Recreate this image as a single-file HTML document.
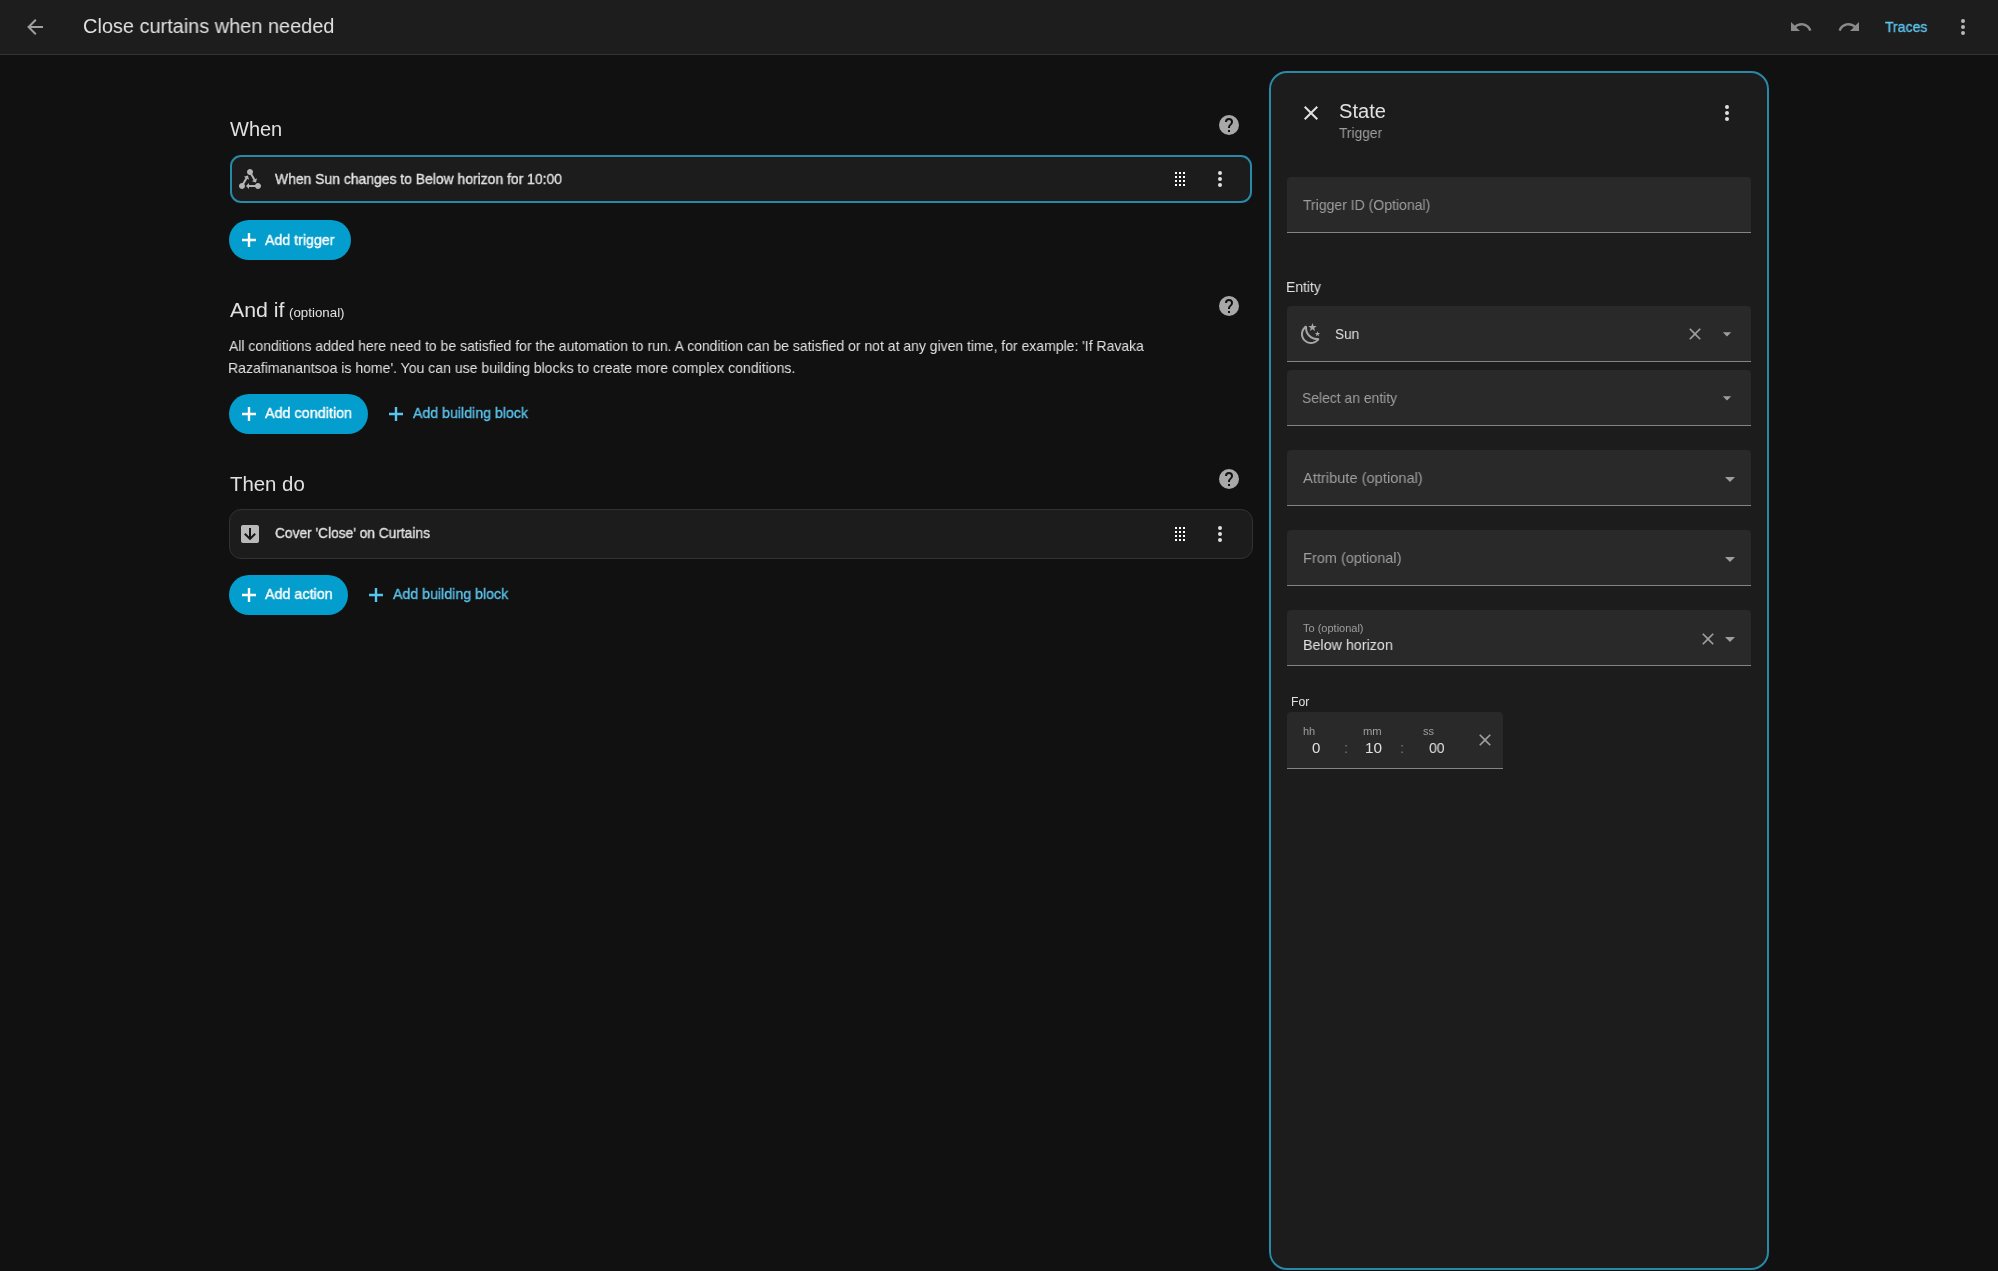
<!DOCTYPE html>
<html>
<head>
<meta charset="utf-8">
<style>
html,body{margin:0;padding:0;}
body{width:1998px;height:1271px;overflow:hidden;background:#111111;position:relative;font-family:"Liberation Sans",sans-serif;color:#e1e1e1;}
.a{position:absolute;}
.t{position:absolute;white-space:nowrap;line-height:1;transform-origin:0 0;will-change:transform;}
svg.i{position:absolute;width:24px;height:24px;}
.med{-webkit-text-stroke:0.35px currentColor;}
.hdr{left:0;top:0;width:1998px;height:54px;background:#1d1d1d;border-bottom:1px solid #333333;}
.card{position:absolute;left:229px;width:1024px;height:50px;box-sizing:border-box;background:#1c1c1c;border-radius:12px;}
.btn{position:absolute;left:229px;height:40px;border-radius:20px;background:#039ecd;}
.panel{left:1269px;top:71px;width:500px;height:1199px;box-sizing:border-box;border:2px solid #2889a8;border-radius:18px;background:#1c1c1c;}
.fld{position:absolute;left:1287px;width:464px;box-sizing:border-box;background:#292929;border-radius:4px 4px 0 0;border-bottom:1px solid #858585;}
.gray{color:#9e9e9e;}
</style>
</head>
<body>
<!-- header -->
<div class="a hdr"></div>
<svg class="i" style="left:23px;top:15px" viewBox="0 0 24 24"><path fill="#a0a0a0" d="M20,11V13H8L13.5,18.5L12.08,19.92L4.16,12L12.08,4.08L13.5,5.5L8,11H20Z"/></svg>
<svg class="i" style="left:1789px;top:15px" viewBox="0 0 24 24"><path fill="#8a8a8a" d="M12.5,8C9.85,8 7.45,9 5.6,10.6L2,7V16H11L7.38,12.38C8.77,11.22 10.54,10.5 12.5,10.5C16.04,10.5 19.05,12.81 20.1,16L22.47,15.22C21.08,11.03 17.15,8 12.5,8Z"/></svg>
<svg class="i" style="left:1837px;top:15px" viewBox="0 0 24 24"><path fill="#8a8a8a" d="M18.4,10.6C16.55,9 14.15,8 11.5,8C6.85,8 2.92,11.03 1.54,15.22L3.9,16C4.95,12.81 7.95,10.5 11.5,10.5C13.45,10.5 15.23,11.22 16.62,12.38L13,16H22V7L18.4,10.6Z"/></svg>
<svg class="i" style="left:1951px;top:15px" viewBox="0 0 24 24"><path fill="#b8b8b8" d="M12,16A2,2 0 0,1 14,18A2,2 0 0,1 12,20A2,2 0 0,1 10,18A2,2 0 0,1 12,16M12,10A2,2 0 0,1 14,12A2,2 0 0,1 12,14A2,2 0 0,1 10,12A2,2 0 0,1 12,10M12,4A2,2 0 0,1 14,6A2,2 0 0,1 12,8A2,2 0 0,1 10,6A2,2 0 0,1 12,4Z"/></svg>

<!-- When -->
<svg class="i" style="left:1217px;top:113px" viewBox="0 0 24 24"><circle cx="12" cy="12" r="10" fill="#a8a8a8"/><path fill="#111" d="M15.07,11.25L14.17,12.17C13.45,12.89 13,13.5 13,15H11V14.5C11,13.39 11.45,12.39 12.17,11.67L13.41,10.41C13.78,10.05 14,9.55 14,9C14,7.89 13.1,7 12,7A2,2 0 0,0 10,9H8A4,4 0 0,1 12,5A4,4 0 0,1 16,9C16,9.88 15.64,10.670 15.07,11.25M13,19H11V17H13Z"/></svg>
<div class="card" style="top:155px;left:230px;width:1022px;height:48px;border:2px solid #2889a8;border-radius:11px;"></div>
<svg class="i" style="left:238px;top:167px" viewBox="0 0 24 24"><path fill="#b4b4b4" d="M6.27 17.05C6.72 17.58 7 18.250 7 19C7 20.66 5.66 22 4 22S1 20.66 1 19 2.34 16 4 16C4.18 16 4.36 16 4.53 16.05L7.6 10.69L5.86 9.7L9.95 8.58L11.07 12.67L9.33 11.68L6.27 17.05M20 16C18.7 16 17.6 16.84 17.18 18H11V16L8 19L11 22V20H17.18C17.6 21.16 18.7 22 20 22C21.66 22 23 20.66 23 19S21.66 16 20 16M12 8C12.18 8 12.36 8 12.53 7.950L15.6 13.31L13.86 14.3L17.95 15.42L19.07 11.33L17.33 12.32L14.27 6.95C14.72 6.42 15 5.75 15 5C15 3.34 13.66 2 12 2S9 3.34 9 5 10.34 8 12 8Z"/></svg>
<svg class="i" style="left:1168px;top:167px" viewBox="0 0 24 24"><path fill="#ffffff" d="M7,19V17H9V19H7M11,19V17H13V19H11M15,19V17H17V19H15M7,15V13H9V15H7M11,15V13H13V15H11M15,15V13H17V15H15M7,11V9H9V11H7M11,11V9H13V11H11M15,11V9H17V11H15M7,7V5H9V7H7M11,7V5H13V7H11M15,7V5H17V7H15Z"/></svg>
<svg class="i" style="left:1208px;top:167px" viewBox="0 0 24 24"><path fill="#e1e1e1" d="M12,16A2,2 0 0,1 14,18A2,2 0 0,1 12,20A2,2 0 0,1 10,18A2,2 0 0,1 12,16M12,10A2,2 0 0,1 14,12A2,2 0 0,1 12,14A2,2 0 0,1 10,12A2,2 0 0,1 12,10M12,4A2,2 0 0,1 14,6A2,2 0 0,1 12,8A2,2 0 0,1 10,6A2,2 0 0,1 12,4Z"/></svg>
<div class="btn" style="top:220px;width:122px;"></div>
<svg class="i" style="left:237px;top:228px" viewBox="0 0 24 24"><path fill="#ffffff" d="M19,13.2H13.2V19H10.8V13.2H5V10.8H10.8V5H13.2V10.8H19V13.2Z"/></svg>

<!-- And if -->
<svg class="i" style="left:1217px;top:294px" viewBox="0 0 24 24"><circle cx="12" cy="12" r="10" fill="#a8a8a8"/><path fill="#111" d="M15.07,11.25L14.17,12.17C13.45,12.89 13,13.5 13,15H11V14.5C11,13.39 11.45,12.39 12.17,11.67L13.41,10.41C13.78,10.05 14,9.55 14,9C14,7.89 13.1,7 12,7A2,2 0 0,0 10,9H8A4,4 0 0,1 12,5A4,4 0 0,1 16,9C16,9.88 15.64,10.670 15.07,11.25M13,19H11V17H13Z"/></svg>
<div class="btn" style="top:394px;width:139px;"></div>
<svg class="i" style="left:237px;top:402px" viewBox="0 0 24 24"><path fill="#ffffff" d="M19,13.2H13.2V19H10.8V13.2H5V10.8H10.8V5H13.2V10.8H19V13.2Z"/></svg>
<svg class="i" style="left:384px;top:402px" viewBox="0 0 24 24"><path fill="#5bc4ee" d="M19,13.2H13.2V19H10.8V13.2H5V10.8H10.8V5H13.2V10.8H19V13.2Z"/></svg>

<!-- Then do -->
<svg class="i" style="left:1217px;top:467px" viewBox="0 0 24 24"><circle cx="12" cy="12" r="10" fill="#a8a8a8"/><path fill="#111" d="M15.07,11.25L14.17,12.17C13.45,12.89 13,13.5 13,15H11V14.5C11,13.39 11.45,12.39 12.17,11.67L13.41,10.41C13.78,10.05 14,9.55 14,9C14,7.89 13.1,7 12,7A2,2 0 0,0 10,9H8A4,4 0 0,1 12,5A4,4 0 0,1 16,9C16,9.88 15.64,10.670 15.07,11.25M13,19H11V17H13Z"/></svg>
<div class="card" style="top:509px;border:1px solid #323232;"></div>
<svg class="i" style="left:238px;top:522px" viewBox="0 0 24 24"><path fill="#b9b9b9" d="M5,3H19A2,2 0 0,1 21,5V19A2,2 0 0,1 19,21H5A2,2 0 0,1 3,19V5A2,2 0 0,1 5,3Z"/><path fill="#151515" d="M11,6V14.5L7.5,11L6.08,12.42L12,18.34L17.92,12.42L16.5,11L13,14.5V6H11Z"/></svg>
<svg class="i" style="left:1168px;top:522px" viewBox="0 0 24 24"><path fill="#ffffff" d="M7,19V17H9V19H7M11,19V17H13V19H11M15,19V17H17V19H15M7,15V13H9V15H7M11,15V13H13V15H11M15,15V13H17V15H15M7,11V9H9V11H7M11,11V9H13V11H11M15,11V9H17V11H15M7,7V5H9V7H7M11,7V5H13V7H11M15,7V5H17V7H15Z"/></svg>
<svg class="i" style="left:1208px;top:522px" viewBox="0 0 24 24"><path fill="#e1e1e1" d="M12,16A2,2 0 0,1 14,18A2,2 0 0,1 12,20A2,2 0 0,1 10,18A2,2 0 0,1 12,16M12,10A2,2 0 0,1 14,12A2,2 0 0,1 12,14A2,2 0 0,1 10,12A2,2 0 0,1 12,10M12,4A2,2 0 0,1 14,6A2,2 0 0,1 12,8A2,2 0 0,1 10,6A2,2 0 0,1 12,4Z"/></svg>
<div class="btn" style="top:575px;width:119px;"></div>
<svg class="i" style="left:237px;top:583px" viewBox="0 0 24 24"><path fill="#ffffff" d="M19,13.2H13.2V19H10.8V13.2H5V10.8H10.8V5H13.2V10.8H19V13.2Z"/></svg>
<svg class="i" style="left:364px;top:583px" viewBox="0 0 24 24"><path fill="#5bc4ee" d="M19,13.2H13.2V19H10.8V13.2H5V10.8H10.8V5H13.2V10.8H19V13.2Z"/></svg>

<!-- PANEL -->
<div class="a panel"></div>
<svg class="i" style="left:1299px;top:101px" viewBox="0 0 24 24"><path fill="#e1e1e1" d="M19,6.41L17.590,5L12,10.59L6.41,5L5,6.41L10.59,12L5,17.59L6.41,19L12,13.41L17.59,19L19,17.59L13.41,12L19,6.41Z"/></svg>
<svg class="i" style="left:1715px;top:101px" viewBox="0 0 24 24"><path fill="#e1e1e1" d="M12,16A2,2 0 0,1 14,18A2,2 0 0,1 12,20A2,2 0 0,1 10,18A2,2 0 0,1 12,16M12,10A2,2 0 0,1 14,12A2,2 0 0,1 12,14A2,2 0 0,1 10,12A2,2 0 0,1 12,10M12,4A2,2 0 0,1 14,6A2,2 0 0,1 12,8A2,2 0 0,1 10,6A2,2 0 0,1 12,4Z"/></svg>

<!-- Trigger ID -->
<div class="fld" style="top:177px;height:56px;"></div>

<!-- Entity -->
<div class="fld" style="top:306px;height:56px;"></div>
<svg class="i" style="left:1299px;top:322px" viewBox="0 0 24 24"><path fill="#a6a6a6" d="M17.75,4.09L15.22,6.03L16.13,9.09L13.5,7.28L10.87,9.09L11.78,6.03L9.25,4.09L12.44,4L13.5,1L14.56,4L17.75,4.09M21.25,11L19.61,12.25L20.2,14.23L18.5,13.06L16.8,14.23L17.39,12.25L15.75,11L17.81,10.95L18.5,9L19.19,10.95L21.25,11M18.97,15.95C19.8,15.87 20.69,17.05 20.16,17.8C19.84,18.25 19.5,18.67 19.08,19.07C15.17,23 8.84,23 4.94,19.07C1.03,15.17 1.03,8.83 4.94,4.93C5.34,4.53 5.76,4.17 6.21,3.85C6.96,3.32 8.14,4.21 8.06,5.04C7.79,7.9 8.75,10.87 10.95,13.06C13.14,15.26 16.1,16.22 18.97,15.950M17.33,17.97C14.5,17.81 11.7,16.64 9.53,14.5C7.36,12.31 6.2,9.5 6.04,6.68C3.23,9.82 3.34,14.64 6.35,17.66C9.37,20.67 14.19,20.78 17.33,17.97Z"/></svg>
<svg class="a" style="left:1685px;top:324px;width:20px;height:20px" viewBox="0 0 24 24"><path fill="#9e9e9e" d="M19,6.41L17.59,5L12,10.59L6.41,5L5,6.41L10.59,12L5,17.59L6.41,19L12,13.41L17.59,19L19,17.59L13.41,12L19,6.41Z"/></svg>
<svg class="a" style="left:1717px;top:324px;width:20px;height:20px" viewBox="0 0 24 24"><path fill="#9e9e9e" d="M7,10L12,15L17,10H7Z"/></svg>

<!-- Select entity -->
<div class="fld" style="top:370px;height:56px;"></div>
<svg class="a" style="left:1717px;top:388px;width:20px;height:20px" viewBox="0 0 24 24"><path fill="#9e9e9e" d="M7,10L12,15L17,10H7Z"/></svg>

<!-- Attribute -->
<div class="fld" style="top:450px;height:56px;"></div>
<svg class="i" style="left:1718px;top:467px" viewBox="0 0 24 24"><path fill="#9e9e9e" d="M7,10L12,15L17,10H7Z"/></svg>

<!-- From -->
<div class="fld" style="top:530px;height:56px;"></div>
<svg class="i" style="left:1718px;top:547px" viewBox="0 0 24 24"><path fill="#9e9e9e" d="M7,10L12,15L17,10H7Z"/></svg>

<!-- To -->
<div class="fld" style="top:610px;height:56px;"></div>
<svg class="a" style="left:1698px;top:629px;width:20px;height:20px" viewBox="0 0 24 24"><path fill="#9e9e9e" d="M19,6.41L17.59,5L12,10.59L6.41,5L5,6.41L10.59,12L5,17.59L6.41,19L12,13.41L17.59,19L19,17.59L13.41,12L19,6.41Z"/></svg>
<svg class="i" style="left:1718px;top:627px" viewBox="0 0 24 24"><path fill="#9e9e9e" d="M7,10L12,15L17,10H7Z"/></svg>

<!-- For -->
<div class="fld" style="top:712px;height:57px;width:216px;"></div>
<svg class="a" style="left:1475px;top:730px;width:20px;height:20px" viewBox="0 0 24 24"><path fill="#9e9e9e" d="M19,6.41L17.59,5L12,10.59L6.41,5L5,6.41L10.59,12L5,17.59L6.41,19L12,13.41L17.59,19L19,17.59L13.41,12L19,6.41Z"/></svg>
<div class="t" style="left:1344px;top:740px;font-size:15px;color:#757575;">:</div>
<div class="t" style="left:1400px;top:740px;font-size:15px;color:#757575;">:</div>
<div class="t" style="left:83.00px;top:16.07px;font-size:20px;color:#e1e1e1;transform:scaleX(0.9960);">Close curtains when needed</div>
<div class="t med" style="left:1884.70px;top:18.70px;font-size:15px;color:#5bc4ee;transform:scaleX(0.9356);">Traces</div>
<div class="t" style="left:229.80px;top:119.07px;font-size:20px;color:#e1e1e1;">When</div>
<div class="t med" style="left:274.70px;top:171.30px;font-size:15px;color:#e1e1e1;transform:scaleX(0.9275);">When Sun changes to Below horizon for 10:00</div>
<div class="t med" style="left:265.00px;top:232.30px;font-size:15px;color:#ffffff;transform:scaleX(0.9459);">Add trigger</div>
<div class="t" style="left:229.50px;top:300.07px;font-size:20px;color:#e1e1e1;transform:scaleX(1.0647);">And if</div>
<div class="t" style="left:288.68px;top:306.00px;font-size:13px;color:#e1e1e1;transform:scaleX(1.0245);">(optional)</div>
<div class="t" style="left:229.30px;top:338.30px;font-size:15px;color:#e1e1e1;transform:scaleX(0.9327);">All conditions added here need to be satisfied for the automation to run. A condition can be satisfied or not at any given time, for example: 'If Ravaka</div>
<div class="t" style="left:228.36px;top:360.30px;font-size:15px;color:#e1e1e1;transform:scaleX(0.9366);">Razafimanantsoa is home'. You can use building blocks to create more complex conditions.</div>
<div class="t med" style="left:265.30px;top:405.30px;font-size:15px;color:#ffffff;transform:scaleX(0.9578);">Add condition</div>
<div class="t med" style="left:412.70px;top:405.30px;font-size:15px;color:#5bc4ee;transform:scaleX(0.9443);">Add building block</div>
<div class="t" style="left:229.90px;top:474.07px;font-size:20px;color:#e1e1e1;transform:scaleX(1.0192);">Then do</div>
<div class="t med" style="left:274.50px;top:525.30px;font-size:15px;color:#e1e1e1;transform:scaleX(0.9160);">Cover 'Close' on Curtains</div>
<div class="t med" style="left:265.30px;top:586.30px;font-size:15px;color:#ffffff;transform:scaleX(0.9543);">Add action</div>
<div class="t med" style="left:392.60px;top:586.30px;font-size:15px;color:#5bc4ee;transform:scaleX(0.9459);">Add building block</div>
<div class="t" style="left:1338.80px;top:101.07px;font-size:20px;color:#e1e1e1;transform:scaleX(1.0044);">State</div>
<div class="t" style="left:1339.30px;top:124.80px;font-size:15px;color:#9e9e9e;transform:scaleX(0.9191);">Trigger</div>
<div class="t" style="left:1303.10px;top:197.30px;font-size:15px;color:#9e9e9e;transform:scaleX(0.9346);">Trigger ID (Optional)</div>
<div class="t" style="left:1286.47px;top:279.30px;font-size:15px;color:#e1e1e1;transform:scaleX(0.9297);">Entity</div>
<div class="t" style="left:1334.69px;top:326.30px;font-size:15px;color:#e1e1e1;transform:scaleX(0.9080);">Sun</div>
<div class="t" style="left:1302.47px;top:390.30px;font-size:15px;color:#9e9e9e;transform:scaleX(0.9265);">Select an entity</div>
<div class="t" style="left:1303.30px;top:470.30px;font-size:15px;color:#9e9e9e;transform:scaleX(0.9770);">Attribute (optional)</div>
<div class="t" style="left:1302.53px;top:550.30px;font-size:15px;color:#9e9e9e;transform:scaleX(0.9680);">From (optional)</div>
<div class="t" style="left:1303.10px;top:622.69px;font-size:11px;color:#9e9e9e;">To (optional)</div>
<div class="t" style="left:1302.65px;top:637.30px;font-size:15px;color:#e1e1e1;transform:scaleX(0.9527);">Below horizon</div>
<div class="t" style="left:1290.98px;top:695.84px;font-size:12px;color:#e1e1e1;transform:scaleX(1.0176);">For</div>
<div class="t" style="left:1302.60px;top:725.69px;font-size:11px;color:#9e9e9e;">hh</div>
<div class="t" style="left:1363.00px;top:725.69px;font-size:11px;color:#9e9e9e;transform:scaleX(1.0222);">mm</div>
<div class="t" style="left:1422.85px;top:725.69px;font-size:11px;color:#9e9e9e;">ss</div>
<div class="t" style="left:1312.10px;top:740.30px;font-size:15px;color:#e1e1e1;">0</div>
<div class="t" style="left:1365.48px;top:740.30px;font-size:15px;color:#e1e1e1;transform:scaleX(1.0200);">10</div>
<div class="t" style="left:1429.20px;top:740.30px;font-size:15px;color:#e1e1e1;transform:scaleX(0.9375);">00</div>
</body>
</html>
